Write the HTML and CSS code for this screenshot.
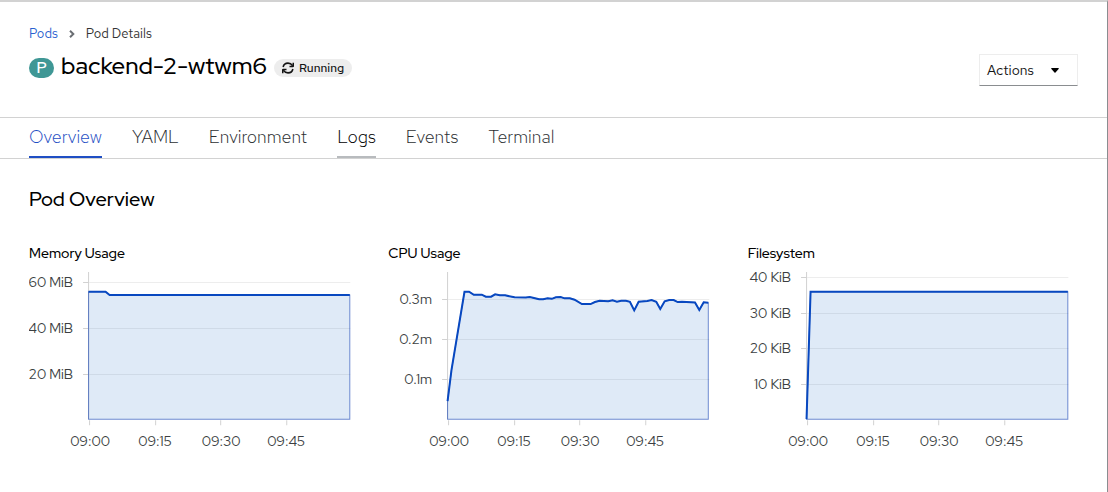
FILE: index.html
```html
<!DOCTYPE html>
<html lang="en">
<head>
<meta charset="utf-8">
<title>backend-2-wtwm6 · Pod Details</title>
<link rel="stylesheet" href="styles.css">
</head>
<body>
<div class="page">
  <header class="header">
    <div class="heading">
      <nav class="breadcrumb" aria-label="Breadcrumb">
        <a class="breadcrumb-link" href="#">Pods</a>
        <svg class="breadcrumb-arrow" viewBox="0 0 6 8" aria-hidden="true"><path d="M1 .8 4.3 4 1 7.2"/></svg>
        <span>Pod Details</span>
      </nav>
      <div class="title-row">
        <span class="badge">P</span>
        <h1 class="title">backend-2-wtwm6</h1>
        <span class="status">
          <svg class="status-icon" viewBox="0 0 512 512" aria-hidden="true"><path d="M482 30v140q0 24-24 24H320M30 482V342q0-24 24-24h138"/><path d="M48 215C70 115 155 48 256 48c80 0 145 35 200 110M464 297c-22 100-107 167-208 167-80 0-145-35-200-110"/></svg>
          Running
        </span>
      </div>
    </div>
    <button class="actions" type="button">
      Actions
      <svg class="caret" viewBox="0 0 8 5" aria-hidden="true"><path d="M.7 0h6.6q.9.2.3.9L4.5 4.6Q4 5.1 3.5 4.6L.4.9Q-.2.2.7 0z"/></svg>
    </button>
  </header>
  <nav class="tabs" aria-label="Pod sections">
    <a class="tab tab-current" href="#" aria-current="page">Overview</a>
    <a class="tab" href="#">YAML</a>
    <a class="tab" href="#">Environment</a>
    <a class="tab tab-hover" href="#">Logs</a>
    <a class="tab" href="#">Events</a>
    <a class="tab" href="#">Terminal</a>
  </nav>
  <main class="content">
    <h2 class="section-title">Pod Overview</h2>
    <div class="charts">
      <section class="card">
        <h3 class="card-title">Memory Usage</h3>
        <svg class="chart" viewBox="0 0 330 188" role="img" aria-label="Memory usage over time">
          <path class="axis" d="M59.5 8V155M54 18.5H60M54 64.5H60M54 110.5H60M60.5 156V161M126.5 156V161M191.5 156V161M257.5 156V161"/>
          <path class="grid" d="M60 18.5H321M60 64.5H321M60 110.5H321"/>
          <path class="area" d="M59.5 27.7H76.5L80.5 31H320.5V155H59.5Z"/>
          <path class="line" d="M59.5 27.7H76.5L80.5 31H320.5"/>
          <g class="y-labels"><text x="44" y="23">60 MiB</text><text x="44" y="69">40 MiB</text><text x="44" y="115">20 MiB</text></g>
          <g class="x-labels"><text x="61" y="182">09:00</text><text x="126" y="182">09:15</text><text x="192" y="182">09:30</text><text x="257" y="182">09:45</text></g>
        </svg>
      </section>
      <section class="card">
        <h3 class="card-title">CPU Usage</h3>
        <svg class="chart" viewBox="0 0 330 188" role="img" aria-label="CPU usage over time">
          <path class="axis" d="M59.5 8V155M54 35.5H60M54 75.5H60M54 115.5H60M60.5 156V161M126.5 156V161M191.5 156V161M257.5 156V161"/>
          <path class="grid" d="M60 35.5H321M60 75.5H321M60 115.5H321"/>
          <path class="area" d="M59.5 137 63.4 106 76.4 27.7H81L85.7 30.7H93.7L97.7 32.7H103L107 30.3 111.7 31.3H117L126.4 33.3 137.7 33.5 141.7 33 151 35.3H155L159.4 34.3 163.7 34.8 167.7 33.3 172.4 33 176.4 34.3H181.7L186.4 35.7 193.7 40H202.4L206.7 38 211.4 36.7 220 37.3 224.4 36.3 228.7 37.7 233 36.7H237.7L241.7 37.7 246 46.3 250.4 37.7 259 37 263.4 36 268 37.7 272 45 276.4 37.3 281 36H285.4L289.4 38 293.7 37.7 306.7 38.5 311 46 315.4 38.3 320 38.7V155H59.5Z"/>
          <path class="line" d="M59.5 137 63.4 106 76.4 27.7H81L85.7 30.7H93.7L97.7 32.7H103L107 30.3 111.7 31.3H117L126.4 33.3 137.7 33.5 141.7 33 151 35.3H155L159.4 34.3 163.7 34.8 167.7 33.3 172.4 33 176.4 34.3H181.7L186.4 35.7 193.7 40H202.4L206.7 38 211.4 36.7 220 37.3 224.4 36.3 228.7 37.7 233 36.7H237.7L241.7 37.7 246 46.3 250.4 37.7 259 37 263.4 36 268 37.7 272 45 276.4 37.3 281 36H285.4L289.4 38 293.7 37.7 306.7 38.5 311 46 315.4 38.3 320 38.7"/>
          <g class="y-labels"><text x="44" y="40">0.3m</text><text x="44" y="80">0.2m</text><text x="44" y="120">0.1m</text></g>
          <g class="x-labels"><text x="61" y="182">09:00</text><text x="126" y="182">09:15</text><text x="192" y="182">09:30</text><text x="257" y="182">09:45</text></g>
        </svg>
      </section>
      <section class="card">
        <h3 class="card-title">Filesystem</h3>
        <svg class="chart" viewBox="0 0 330 188" role="img" aria-label="Filesystem usage over time">
          <path class="axis" d="M58.5 8V155M53 13.5H59M53 49.5H59M53 84.5H59M53 120.5H59M59.5 156V161M125.5 156V161M190.5 156V161M256.5 156V161"/>
          <path class="grid" d="M59 13.5H320M59 49.5H320M59 84.5H320M59 120.5H320"/>
          <path class="area" d="M58.5 155 62.5 27.7H319.5V155Z"/>
          <path class="line" d="M58.5 155 62.5 27.7H319.5"/>
          <g class="y-labels"><text x="43" y="18">40 KiB</text><text x="43" y="54">30 KiB</text><text x="43" y="89">20 KiB</text><text x="43" y="125">10 KiB</text></g>
          <g class="x-labels"><text x="60" y="182">09:00</text><text x="125" y="182">09:15</text><text x="191" y="182">09:30</text><text x="256" y="182">09:45</text></g>
        </svg>
      </section>
    </div>
  </main>
</div>
</body>
</html>
```
FILE: styles.css
```css
* { box-sizing: border-box; }

body {
  margin: 0;
  background: #fff;
  color: #151515;
  font-family: "Red Hat Text", Inter, sans-serif;
  font-size: 14px;
}

.page {
  min-height: 100vh;
  border-top: 2px solid #d2d2d2;
  border-right: 1px solid #8a8d90;
}

.header {
  display: flex;
  justify-content: space-between;
  align-items: flex-end;
  padding: 24px 29px 31px;
  border-bottom: 1px solid #d2d2d2;
}

.heading {
  display: flex;
  flex-direction: column;
  gap: 10px;
  padding-bottom: 2px;
}

.breadcrumb {
  display: flex;
  align-items: center;
  gap: 11px;
  font-size: 13px;
  line-height: 16px;
  color: #333;
}

.breadcrumb-link {
  color: #2b5fd0;
  text-decoration: none;
}

.breadcrumb-arrow {
  width: 6px;
  height: 8px;
  fill: none;
  stroke: #6a6e73;
  stroke-width: 2;
}

.title-row {
  display: flex;
  align-items: center;
  gap: 7px;
}

.badge {
  width: 25px;
  border-radius: 10px;
  background: #3f9795;
  color: #fff;
  font-size: 16px;
  font-weight: 500;
  line-height: 20px;
  text-align: center;
}

.title {
  margin: 0;
  padding-bottom: 4px;
  font-family: "Red Hat Display", "Red Hat Text", Inter, sans-serif;
  font-size: 24px;
  font-weight: 500;
  line-height: 28px;
  color: #000;
}

.status {
  display: flex;
  align-items: center;
  gap: 5px;
  padding: 0 8px;
  border-radius: 9px;
  background: #ededed;
  font-size: 12px;
  font-weight: 500;
  line-height: 18px;
}

.status-icon {
  width: 12px;
  height: 12px;
  fill: none;
  stroke: #151515;
  stroke-width: 68;
}

.actions {
  display: flex;
  justify-content: space-between;
  align-items: center;
  width: 99px;
  height: 32px;
  padding: 0 18px 0 7px;
  border: 1px solid #ededed;
  border-bottom-color: #8a8d90;
  background: #fff;
  color: #151515;
  font: inherit;
}

.caret {
  width: 8px;
  height: 5px;
}

.tabs {
  display: flex;
  gap: 30px;
  padding: 0 29px;
  border-bottom: 1px solid #d2d2d2;
}

.tab {
  padding: 5px 0;
  border-bottom: 2px solid transparent;
  color: #2c2f32;
  font-size: 18px;
  font-weight: 300;
  line-height: 28px;
  text-decoration: none;
}

.tab-current {
  border-color: #1f4fc4;
  color: #1f4fc4;
}

.tab-hover {
  border-color: #b8bbbe;
  color: #000;
}

.content { padding: 26px 29px; }

.section-title {
  margin: 0 0 31px;
  font-family: "Red Hat Display", "Red Hat Text", Inter, sans-serif;
  font-size: 20px;
  font-weight: 500;
  line-height: 28px;
  color: #000;
}

.charts {
  display: grid;
  grid-template-columns: repeat(3, minmax(0, 1fr));
  gap: 29px;
}

.card-title {
  margin: 0;
  padding-bottom: 1px;
  font-family: "Red Hat Display", "Red Hat Text", Inter, sans-serif;
  font-size: 14px;
  font-weight: 500;
  line-height: 19px;
  color: #000;
}

.chart {
  display: block;
  width: 100%;
  font-family: "Red Hat Display", "Red Hat Text", Inter, sans-serif;
  font-size: 14px;
  fill: #3c3f42;
}

.axis { fill: none; stroke: #d2d2d2; }

.grid { fill: none; stroke: #ededed; }

.area {
  fill: #0a5ac4;
  fill-opacity: 0.13;
  stroke: #1745b4;
  stroke-opacity: 0.6;
}

.line {
  fill: none;
  stroke: #0848c0;
  stroke-width: 2;
}

.y-labels { text-anchor: end; }

.x-labels { text-anchor: middle; }
```
